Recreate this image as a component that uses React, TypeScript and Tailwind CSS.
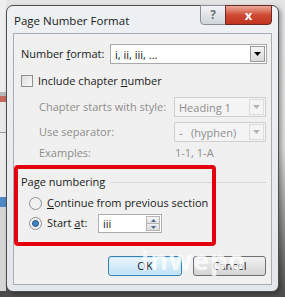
import React from 'react'

const font = { fontFamily: '"Open Sans", "Noto Sans", sans-serif' }

function DropArrow({ disabled }: { disabled?: boolean }) {
  return (
    <svg width="7" height="4" viewBox="0 0 7 4">
      <path d="M0 0 H7 L3.5 4 Z" fill={disabled ? '#b4b4b4' : '#000'} />
    </svg>
  )
}

function Combo({ value, width, disabled }: { value: string; width: string; disabled?: boolean }) {
  return (
    <div
      className={`flex h-[20px] shrink-0 items-center border ${width} ${
        disabled ? 'border-[#cfcfcf] bg-[#f4f4f4] text-[#8d8d8d]' : 'border-[#a9a9a9] bg-white text-[#111]'
      }`}
    >
      <span className="flex-1 whitespace-pre pl-[4px] leading-none">{value}</span>
      <div
        className={`mr-[1px] flex h-[16px] w-[15px] items-center justify-center border ${
          disabled
            ? 'border-[#dcdcdc] bg-[#f4f4f4]'
            : 'border-[#9a9a9a] bg-gradient-to-b from-[#f6f6f6] to-[#d9d9d9]'
        }`}
      >
        <DropArrow disabled={disabled} />
      </div>
    </div>
  )
}

function Radio({ checked }: { checked?: boolean }) {
  return (
    <div className="flex h-[13px] w-[13px] shrink-0 items-center justify-center rounded-full border border-[#8e8f8f] bg-[#f1f1f1]">
      {checked && <div className="h-[7px] w-[7px] rounded-full border border-[#1d4f7a] bg-[#3f86c2]" />}
    </div>
  )
}

export default function App() {
  return (
    <div
      className="relative flex h-[297px] w-[285px] overflow-hidden bg-gradient-to-b from-[#e4e4e4] via-[#dadada] to-[#4c4c4c] text-[11px]"
      style={font}
    >
      {/* blurred document behind the dialog */}
      <div className="flex w-[6px] shrink-0 flex-col">
        <div className="h-[92px] bg-[#eeeeee]" />
        <div className="h-[4px] bg-[#b8b8b8]" />
        <div className="h-[6px] bg-[#c66a5e]" />
        <div className="h-[30px] bg-[#e8e8e8]" />
        <div className="h-[1px] bg-[#9a9a9a]" />
        <div className="h-[64px] bg-[#ececec]" />
        <div className="h-[10px] bg-[#4e88c4]" />
        <div className="flex-1 bg-[#d6d6d6]" />
        <div className="h-[6px] bg-[#4a4a4a]" />
      </div>

      {/* dialog window */}
      <div className="mt-[5px] flex h-[287px] w-[273px] shrink-0 flex-col rounded-[7px] border border-[#4d4d4d] bg-gradient-to-b from-[#eef1f4] to-[#e3e7eb] px-[6px] pb-[6px] shadow-[2px_2px_4px_rgba(0,0,0,0.35)]">
        {/* title bar */}
        <div className="flex h-[27px] items-start">
          <span className="ml-[1px] mt-[9px] flex-1 whitespace-nowrap text-[11.5px] leading-none text-[#1a1a1a]">Page Number Format</span>
          <div className="-mt-[1px] flex h-[20px] w-[26px] items-center justify-center rounded-bl-[4px] border border-[#8a8f96] bg-gradient-to-b from-[#f2f4f6] to-[#cfd5db]">
            <span className="text-[12px] font-bold leading-none text-[#6d737a]">?</span>
          </div>
          <div className="-ml-[1px] -mt-[1px] flex h-[20px] w-[47px] items-center justify-center rounded-br-[4px] border border-[#6e2a22] bg-gradient-to-b from-[#e9a99a] via-[#cf4a34] to-[#c0331e]">
            <span className="text-[13px] font-bold leading-none text-white">x</span>
          </div>
        </div>

        {/* client area */}
        <div className="relative flex flex-1 flex-col whitespace-nowrap border border-[#a7adb3] bg-[#f0f0f0] pl-[7px] text-[#1a1a1a]">
          <div className="mt-[10px] flex h-[20px] items-center">
            <span className="w-[89px] shrink-0">
              Number <u>f</u>ormat:
            </span>
            <Combo value="i, ii, iii, ..." width="w-[157px]" />
          </div>

          <div className="mt-[10px] flex h-[14px] items-center gap-[5px]">
            <div className="h-[12px] w-[12px] shrink-0 border border-[#8e8f8f] bg-gradient-to-br from-[#dcdcdc] to-[#fafafa]" />
            <span>
              Include chapter <u>n</u>umber
            </span>
          </div>

          <div className="mt-[9px] flex h-[20px] items-center text-[#8d8d8d]">
            <span className="w-[153px] shrink-0 pl-[18px]">Chapter starts with style:</span>
            <Combo value="Heading 1" width="w-[92px]" disabled />
          </div>

          <div className="mt-[5px] flex h-[20px] items-center text-[#8d8d8d]">
            <span className="w-[153px] shrink-0 pl-[18px]">Use separator:</span>
            <Combo value="-   (hyphen)" width="w-[92px]" disabled />
          </div>

          <div className="mt-[4px] flex h-[14px] items-center text-[#8d8d8d]">
            <span className="w-[153px] shrink-0 pl-[18px]">Examples:</span>
            <span className="pl-[1px]">1-1, 1-A</span>
          </div>

          <div className="mt-[15px] flex h-[14px] items-center gap-[6px] pr-[5px]">
            <span>Page numbering</span>
            <div className="h-[1px] flex-1 bg-[#d5d5d5]" />
          </div>

          <div className="mt-[7px] flex h-[14px] items-center gap-[5px] pl-[8px]">
            <Radio />
            <span>
              <u>C</u>ontinue from previous section
            </span>
          </div>

          <div className="mt-[4px] flex h-[19px] items-center pl-[8px]">
            <Radio checked />
            <span className="ml-[5px] w-[51px] shrink-0">
              Start <u>a</u>t:
            </span>
            <div className="flex h-[19px] w-[64px] shrink-0 items-center border border-[#abadb3] bg-white">
              <span className="flex-1 pl-[4px] leading-none">iii</span>
              <div className="mr-[1px] flex h-[15px] w-[14px] flex-col">
                <div className="flex flex-1 items-center justify-center border border-[#b5b5b5] bg-gradient-to-b from-[#f7f7f7] to-[#e0e0e0]">
                  <svg width="5" height="3" viewBox="0 0 5 3"><path d="M0 3 L2.5 0 L5 3 Z" fill="#4a6b8a" /></svg>
                </div>
                <div className="flex flex-1 items-center justify-center border border-t-0 border-[#b5b5b5] bg-gradient-to-b from-[#f0f0f0] to-[#dadada]">
                  <svg width="5" height="3" viewBox="0 0 5 3"><path d="M0 0 L5 0 L2.5 3 Z" fill="#4a6b8a" /></svg>
                </div>
              </div>
            </div>
          </div>

          <div className="mt-[23px] flex h-[20px] items-center gap-[11px] pl-[87px]">
            <div className="flex h-[20px] w-[74px] items-center justify-center rounded-[3px] border border-[#3c7fb1] bg-gradient-to-b from-[#eaf6fd] to-[#bfe0f5] shadow-[inset_0_0_0_1px_#c9eafc]">
              <span>OK</span>
            </div>
            <div className="flex h-[20px] w-[73px] items-center justify-center rounded-[3px] border border-[#707070] bg-gradient-to-b from-[#f2f2f2] to-[#d4d4d4]">
              <span>Cancel</span>
            </div>
          </div>

          {/* red annotation box */}
          <div className="absolute left-[0px] top-[131px] h-[81px] w-[202px] rounded-[4px] border-[4px] border-[#e4000d]" />

          {/* watermark */}
          <span className="absolute left-[127px] top-[212px] text-[27px] font-bold leading-none tracking-[1px] text-white/75">
            inwepo
          </span>
        </div>
      </div>
    </div>
  )
}
